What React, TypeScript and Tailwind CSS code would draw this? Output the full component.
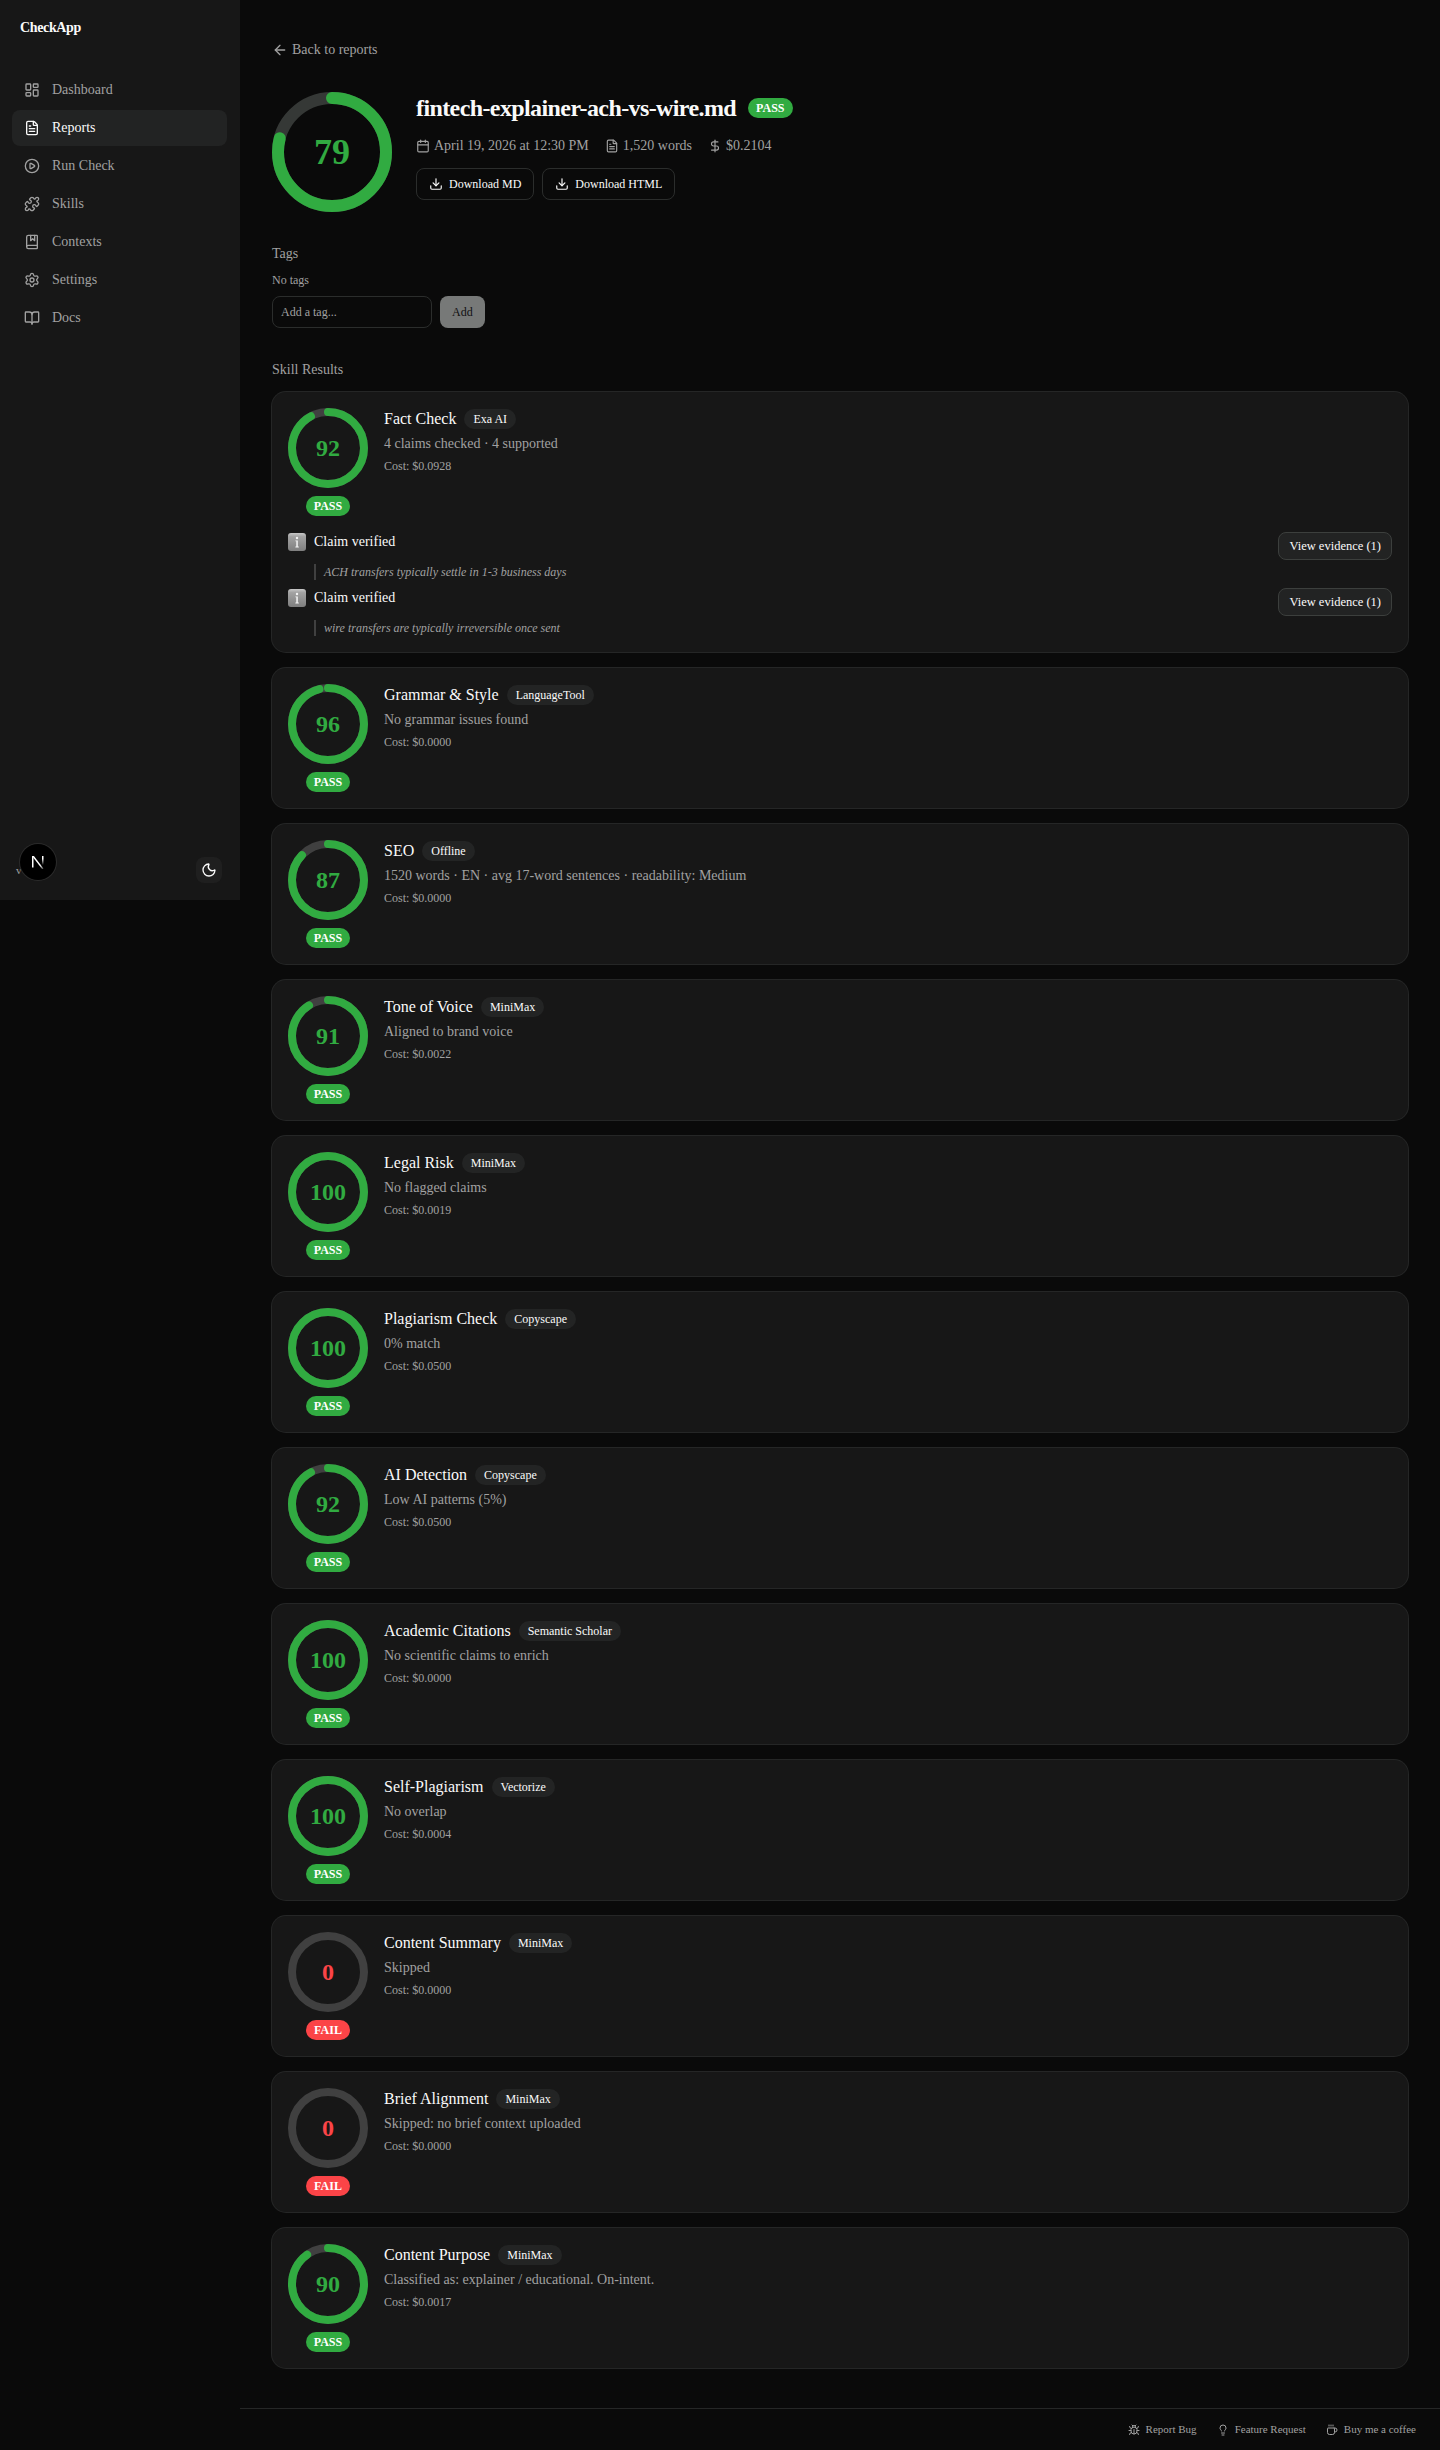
import { clsx } from "clsx";
import {
  ArrowLeft,
  BookMarked,
  BookOpen,
  Bug,
  Calendar,
  CirclePlay,
  Coffee,
  DollarSign,
  Download,
  FileText,
  LayoutDashboard,
  Lightbulb,
  Moon,
  Puzzle,
  Settings,
} from "lucide-react";

interface Finding {
  title: string;
  quote: string;
  sources: number;
}

interface SkillResult {
  name: string;
  provider: string;
  score: number;
  summary: string;
  cost: string;
  findings?: Finding[];
}

const NAV = [
  { label: "Dashboard", icon: LayoutDashboard },
  { label: "Reports", icon: FileText, active: true },
  { label: "Run Check", icon: CirclePlay },
  { label: "Skills", icon: Puzzle },
  { label: "Contexts", icon: BookMarked },
  { label: "Settings", icon: Settings },
  { label: "Docs", icon: BookOpen },
];

const RESULTS: SkillResult[] = [
  {
    name: "Fact Check",
    provider: "Exa AI",
    score: 92,
    summary: "4 claims checked · 4 supported",
    cost: "$0.0928",
    findings: [
      { title: "Claim verified", quote: "ACH transfers typically settle in 1-3 business days", sources: 1 },
      { title: "Claim verified", quote: "wire transfers are typically irreversible once sent", sources: 1 },
    ],
  },
  { name: "Grammar & Style", provider: "LanguageTool", score: 96, summary: "No grammar issues found", cost: "$0.0000" },
  { name: "SEO", provider: "Offline", score: 87, summary: "1520 words · EN · avg 17-word sentences · readability: Medium", cost: "$0.0000" },
  { name: "Tone of Voice", provider: "MiniMax", score: 91, summary: "Aligned to brand voice", cost: "$0.0022" },
  { name: "Legal Risk", provider: "MiniMax", score: 100, summary: "No flagged claims", cost: "$0.0019" },
  { name: "Plagiarism Check", provider: "Copyscape", score: 100, summary: "0% match", cost: "$0.0500" },
  { name: "AI Detection", provider: "Copyscape", score: 92, summary: "Low AI patterns (5%)", cost: "$0.0500" },
  { name: "Academic Citations", provider: "Semantic Scholar", score: 100, summary: "No scientific claims to enrich", cost: "$0.0000" },
  { name: "Self-Plagiarism", provider: "Vectorize", score: 100, summary: "No overlap", cost: "$0.0004" },
  { name: "Content Summary", provider: "MiniMax", score: 0, summary: "Skipped", cost: "$0.0000" },
  { name: "Brief Alignment", provider: "MiniMax", score: 0, summary: "Skipped: no brief context uploaded", cost: "$0.0000" },
  { name: "Content Purpose", provider: "MiniMax", score: 90, summary: "Classified as: explainer / educational. On-intent.", cost: "$0.0017" },
];

function ScoreRing({ score, size, stroke, dim }: { score: number; size: number; stroke: number; dim?: boolean }) {
  const radius = (size - stroke) / 2;
  const circumference = 2 * Math.PI * radius;
  const failed = score < 50;

  return (
    <div className="grid shrink-0 place-items-center">
      <svg width={size} height={size} className="col-start-1 row-start-1 -rotate-90" fill="none" strokeWidth={stroke}>
        <circle cx={size / 2} cy={size / 2} r={radius} className={dim ? "stroke-[#353836]" : "stroke-[#404040]"} />
        {score > 0 && (
          <circle
            cx={size / 2}
            cy={size / 2}
            r={radius}
            className="stroke-[#31ab41]"
            strokeLinecap="round"
            strokeDasharray={circumference}
            strokeDashoffset={circumference * (1 - score / 100)}
          />
        )}
      </svg>
      <span
        className={clsx(
          "col-start-1 row-start-1 font-bold",
          size > 100 ? "text-4xl/9" : "text-2xl/6",
          failed ? "text-[#fb4447]" : "text-[#31ab41]"
        )}
      >
        {score}
      </span>
    </div>
  );
}

function VerdictBadge({ pass }: { pass: boolean }) {
  return (
    <span
      className={clsx(
        "inline-flex h-5 items-center rounded-full px-2 text-xs font-bold text-white",
        pass ? "bg-[#31ab41]" : "bg-[#fb4447]"
      )}
    >
      {pass ? "PASS" : "FAIL"}
    </span>
  );
}

function InfoTile() {
  return (
    <svg width="18" height="18" viewBox="0 0 18 18" className="shrink-0">
      <defs>
        <linearGradient id="tile" x1="0" y1="0" x2="0" y2="1">
          <stop offset="0" stopColor="#c8c8c8" />
          <stop offset="0.2" stopColor="#a2a2a2" />
          <stop offset="1" stopColor="#7e7e7e" />
        </linearGradient>
      </defs>
      <rect width="18" height="18" rx="3" fill="url(#tile)" />
      <circle cx="9" cy="5" r="1.2" fill="#f4f4f4" />
      <path d="M7.4 7.4h2.4v6.2h1v.9H7.4v-.9h.9V8.3h-.9z" fill="#f4f4f4" />
    </svg>
  );
}

function FindingRow({ finding }: { finding: Finding }) {
  return (
    <div className="flex h-12 items-start gap-2">
      <div className="pt-px">
        <InfoTile />
      </div>
      <div className="flex-1">
        <p className="text-sm text-[#fafafa]">{finding.title}</p>
        <p className="mt-3 border-l-2 border-[#404040] pl-2 text-xs italic text-[#a1a1a1]">{finding.quote}</p>
      </div>
      <button className="h-7 rounded-lg border border-[#3c3f3d] bg-[#222323] px-2.5 text-[12.5px]/4 text-[#fafafa]">
        View evidence ({finding.sources})
      </button>
    </div>
  );
}

function SkillCard({ result }: { result: SkillResult }) {
  return (
    <article className="rounded-[14px] bg-[#171717] p-4 ring-1 ring-[#252626]">
      <div className="flex items-start gap-4">
        <div className="flex flex-col items-center gap-2">
          <ScoreRing score={result.score} size={80} stroke={8} />
          <VerdictBadge pass={result.score >= 50} />
        </div>
        <div className="flex flex-col gap-1">
          <div className="flex items-center gap-2">
            <h3 className="text-base/[22px] text-[#fafafa]">{result.name}</h3>
            <span className="flex h-5 items-center rounded-full bg-[#232424] px-[9px] text-xs text-[#fafafa]">
              {result.provider}
            </span>
          </div>
          <p className="text-sm text-[#a1a1a1]">{result.summary}</p>
          <p className="text-xs text-[#a1a1a1]">Cost: {result.cost}</p>
        </div>
      </div>
      {result.findings && (
        <div className="mt-4 flex flex-col gap-2">
          {result.findings.map((finding) => (
            <FindingRow key={finding.quote} finding={finding} />
          ))}
        </div>
      )}
    </article>
  );
}

function Sidebar() {
  return (
    <aside className="flex h-[900px] w-60 shrink-0 flex-col bg-[#171717]">
      <div className="flex h-[55px] items-center px-5 text-sm font-bold tracking-tight text-[#fafafa]">CheckApp</div>
      <nav className="mt-[17px] flex flex-col gap-0.5 pl-3 pr-[13px]">
        {NAV.map(({ label, icon: Icon, active }) => (
          <a
            key={label}
            className={clsx(
              "flex h-9 items-center gap-3 rounded-lg px-3 text-sm",
              active ? "bg-[#222323] text-[#fafafa]" : "text-[#a1a1a1]"
            )}
          >
            <Icon size={16} />
            {label}
          </a>
        ))}
      </nav>
      <div className="relative mt-auto mb-4 flex h-7 items-center justify-between pl-4 pr-[18px]">
        <span className="text-[11px] text-[#a1a1a1]">v</span>
        <button className="flex size-[26px] items-center justify-center rounded-lg bg-[#1f1f1f] text-[#fafafa]">
          <Moon size={16} />
        </button>
        {/* dev tools indicator floats over the version label */}
        <div className="absolute bottom-1 left-5 flex size-9 items-center justify-center rounded-full bg-black ring-1 ring-[#2b2b2b]">
          <svg width="14" height="14" viewBox="0 0 14 14" fill="none">
            <defs>
              <linearGradient id="stem" x1="0" y1="0" x2="0" y2="1">
                <stop offset="0.3" stopColor="#fff" />
                <stop offset="1" stopColor="#fff" stopOpacity="0" />
              </linearGradient>
              <linearGradient id="diagonal" x1="0" y1="0" x2="1" y2="1">
                <stop offset="0.7" stopColor="#fff" />
                <stop offset="1" stopColor="#fff" stopOpacity="0.2" />
              </linearGradient>
            </defs>
            <rect x="1" y="1" width="1.5" height="11.5" fill="#fff" />
            <path d="M1 1h1.9l9.6 12.4-1.2.9z" fill="url(#diagonal)" />
            <rect x="11" y="1" width="1.5" height="9" fill="url(#stem)" />
          </svg>
        </div>
      </div>
    </aside>
  );
}

function ReportHeader() {
  return (
    <header className="flex items-start gap-6">
      <ScoreRing score={79} size={120} stroke={12} dim />
      <div className="flex flex-col gap-3">
        <div className="flex items-center gap-3">
          <h1 className="text-2xl font-bold tracking-tight text-[#fafafa]">fintech-explainer-ach-vs-wire.md</h1>
          <VerdictBadge pass />
        </div>
        <div className="flex items-center gap-4 text-sm text-[#a1a1a1]">
          <span className="flex items-center gap-1">
            <Calendar size={14} />
            April 19, 2026 at 12:30 PM
          </span>
          <span className="flex items-center gap-1">
            <FileText size={14} />
            1,520 words
          </span>
          <span className="flex items-center gap-1">
            <DollarSign size={14} />
            $0.2104
          </span>
        </div>
        <div className="flex gap-2">
          {["Download MD", "Download HTML"].map((label) => (
            <button
              key={label}
              className="flex h-8 items-center gap-1.5 rounded-lg border border-[#2b2d2c] px-3 text-xs text-[#fafafa]"
            >
              <Download size={14} />
              {label}
            </button>
          ))}
        </div>
      </div>
    </header>
  );
}

function Tags() {
  return (
    <section className="mt-8">
      <h2 className="text-sm text-[#a1a1a1]">Tags</h2>
      <p className="mt-2 text-xs text-[#a1a1a1]">No tags</p>
      <div className="mt-2 flex gap-2">
        <input
          placeholder="Add a tag..."
          className="h-8 w-40 rounded-lg border border-[#2b2d2c] bg-transparent px-2 text-xs text-[#fafafa] placeholder:text-[#a1a1a1]"
        />
        <button className="h-8 rounded-lg bg-[#777978] px-3 text-xs text-[#101010]">Add</button>
      </div>
    </section>
  );
}

function Footer() {
  return (
    <footer className="flex h-[42px] items-center justify-end gap-5 border-t border-[#262727] px-6 text-[11px] text-[#a1a1a1]">
      <a className="flex items-center gap-1.5">
        <Bug size={12} />
        Report Bug
      </a>
      <a className="flex items-center gap-1.5">
        <Lightbulb size={12} />
        Feature Request
      </a>
      <a className="flex items-center gap-1.5">
        <Coffee size={12} />
        Buy me a coffee
      </a>
    </footer>
  );
}

export default function App() {
  return (
    <div className="flex min-h-[2450px] items-start bg-[#0a0a0a] font-['Liberation_Serif',serif]">
      <Sidebar />
      <div className="flex min-h-[2450px] min-w-0 flex-1 flex-col justify-between">
        <main className="p-8">
          <a className="mb-6 flex h-9 items-center gap-1 text-sm text-[#a1a1a1]">
            <ArrowLeft size={16} />
            Back to reports
          </a>
          <ReportHeader />
          <Tags />
          <section className="mt-8">
            <h2 className="text-sm text-[#a1a1a1]">Skill Results</h2>
            <div className="mt-3 flex flex-col gap-4">
              {RESULTS.map((result) => (
                <SkillCard key={result.name} result={result} />
              ))}
            </div>
          </section>
        </main>
        <Footer />
      </div>
    </div>
  );
}
